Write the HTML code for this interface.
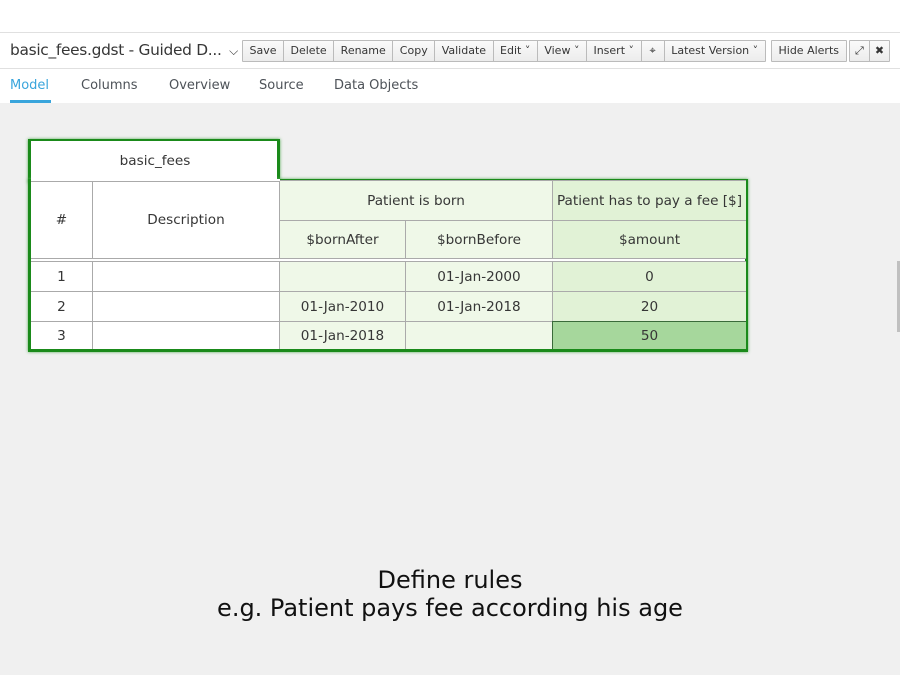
<!DOCTYPE html><html><head><style>
*{margin:0;padding:0;box-sizing:border-box}
body{width:900px;height:675px;overflow:hidden;background:#f0f0f0;font-family:"Liberation Sans","DejaVu Sans",sans-serif;position:relative;color:#333}
.top{position:absolute;left:0;top:0;width:900px;height:103px;background:#fff}
.l{position:absolute;left:0;width:900px;height:1px;background:#e0e0e0}
.title{position:absolute;left:10px;top:41px;font-size:15.4px;color:#363636;font-family:"DejaVu Sans",sans-serif;letter-spacing:-0.3px}
.btns{position:absolute;top:40px;height:22px;display:flex;border:1px solid #bbb;border-radius:1px;background:linear-gradient(#fafafa,#ececec)}
.btns div{font-size:11px;font-family:"DejaVu Sans",sans-serif;padding:0 6.5px;line-height:20px;border-right:1px solid #bbb;color:#363636;white-space:nowrap}
.btns div:last-child{border-right:none}
.tab{position:absolute;top:78px;font-size:13px;color:#4d5258;font-family:"DejaVu Sans",sans-serif}
.c{position:absolute;font-family:"DejaVu Sans",sans-serif;font-size:13.6px;color:#363636;display:flex;align-items:center;justify-content:center;border:1px solid #aaa}
</style></head><body>
<div class="top"></div>
<div class="l" style="top:32px"></div>
<div class="l" style="top:68px"></div>
<div class="title">basic_fees.gdst - Guided D... <span style="font-size:12px;margin-left:3px">⌵</span></div>
<div class="btns" style="left:242px"><div>Save</div><div>Delete</div><div>Rename</div><div>Copy</div><div>Validate</div><div>Edit ˅</div><div>View ˅</div><div>Insert ˅</div><div style="padding:0 8px">⌖</div><div>Latest Version ˅</div></div>
<div class="btns" style="left:771px"><div>Hide Alerts</div></div>
<div class="btns" style="left:849px"><div style="padding:0 5px">⤢</div><div style="padding:0 5px">✖</div></div>
<div class="tab" style="left:10px;color:#39a5dc">Model</div>
<div style="position:absolute;left:10px;top:100px;width:41px;height:3px;background:#39a5dc"></div>
<div class="tab" style="left:81px">Columns</div>
<div class="tab" style="left:169px">Overview</div>
<div class="tab" style="left:259px">Source</div>
<div class="tab" style="left:334px">Data Objects</div>
<div style="position:absolute;left:897px;top:261px;width:3px;height:71px;background:#c0c0c0"></div>

<div style="position:absolute;left:28px;top:139px;width:252px;height:44px;border:3px solid #1a8a1a;border-bottom:none;background:#fff;box-shadow:0 0 3px #5a5"></div>
<div style="position:absolute;left:28px;top:179px;width:720px;height:173px;border:3px solid #1a8a1a;background:#fff;box-shadow:0 0 3px #5a5"></div>
<div style="position:absolute;left:31px;top:141px;width:246px;height:40px;background:#fff"></div>
<div class="c" style="left:31px;top:141px;width:248px;height:40px;border:none;border-bottom:1px solid #aaa">basic_fees</div>
<div class="c" style="left:31px;top:180px;width:62px;height:79px;background:#fff;border-left:none">#</div>
<div class="c" style="left:92px;top:180px;width:188px;height:79px;background:#fff">Description</div>
<div class="c" style="left:279px;top:180px;width:274px;height:41px;background:#eff8e8">Patient is born</div>
<div class="c" style="left:552px;top:180px;width:194px;height:41px;background:#e1f2d6;border-right:none">Patient has to pay a fee [$]</div>
<div class="c" style="left:279px;top:220px;width:127px;height:39px;background:#eff8e8">$bornAfter</div>
<div class="c" style="left:405px;top:220px;width:148px;height:39px;background:#eff8e8">$bornBefore</div>
<div class="c" style="left:552px;top:220px;width:194px;height:39px;background:#e1f2d6;border-right:none">$amount</div>

<div class="c" style="left:31px;top:261px;width:62px;height:31px;background:#fff;border-left:none">1</div>
<div class="c" style="left:92px;top:261px;width:188px;height:31px;background:#fff"></div>
<div class="c" style="left:279px;top:261px;width:127px;height:31px;background:#eff8e8"></div>
<div class="c" style="left:405px;top:261px;width:148px;height:31px;background:#eff8e8">01-Jan-2000</div>
<div class="c" style="left:552px;top:261px;width:194px;height:31px;background:#e1f2d6;border-right:none">0</div>

<div class="c" style="left:31px;top:291px;width:62px;height:31px;background:#fff;border-left:none">2</div>
<div class="c" style="left:92px;top:291px;width:188px;height:31px;background:#fff"></div>
<div class="c" style="left:279px;top:291px;width:127px;height:31px;background:#eff8e8">01-Jan-2010</div>
<div class="c" style="left:405px;top:291px;width:148px;height:31px;background:#eff8e8">01-Jan-2018</div>
<div class="c" style="left:552px;top:291px;width:194px;height:31px;background:#e1f2d6;border-right:none">20</div>

<div class="c" style="left:31px;top:321px;width:62px;height:28px;background:#fff;border-left:none;border-bottom:none">3</div>
<div class="c" style="left:92px;top:321px;width:188px;height:28px;background:#fff;border-bottom:none"></div>
<div class="c" style="left:279px;top:321px;width:127px;height:28px;background:#eff8e8;border-bottom:none">01-Jan-2018</div>
<div class="c" style="left:405px;top:321px;width:148px;height:28px;background:#eff8e8;border-bottom:none"></div>
<div class="c" style="left:552px;top:321px;width:194px;height:28px;background:#a6d79c;border:1px solid #3a6a3a;border-right:none;border-bottom:none">50</div>

<div style="position:absolute;left:31px;top:179px;width:249px;height:3px;background:#fff"></div>
<div style="position:absolute;left:31px;top:181px;width:249px;height:1px;background:#aaa"></div>

<div style="position:absolute;left:0;top:566px;width:900px;text-align:center;font-family:'DejaVu Sans',sans-serif;font-size:24px;color:#111;line-height:28px">Define rules<br>e.g. Patient pays fee according his age</div>
</body></html>
